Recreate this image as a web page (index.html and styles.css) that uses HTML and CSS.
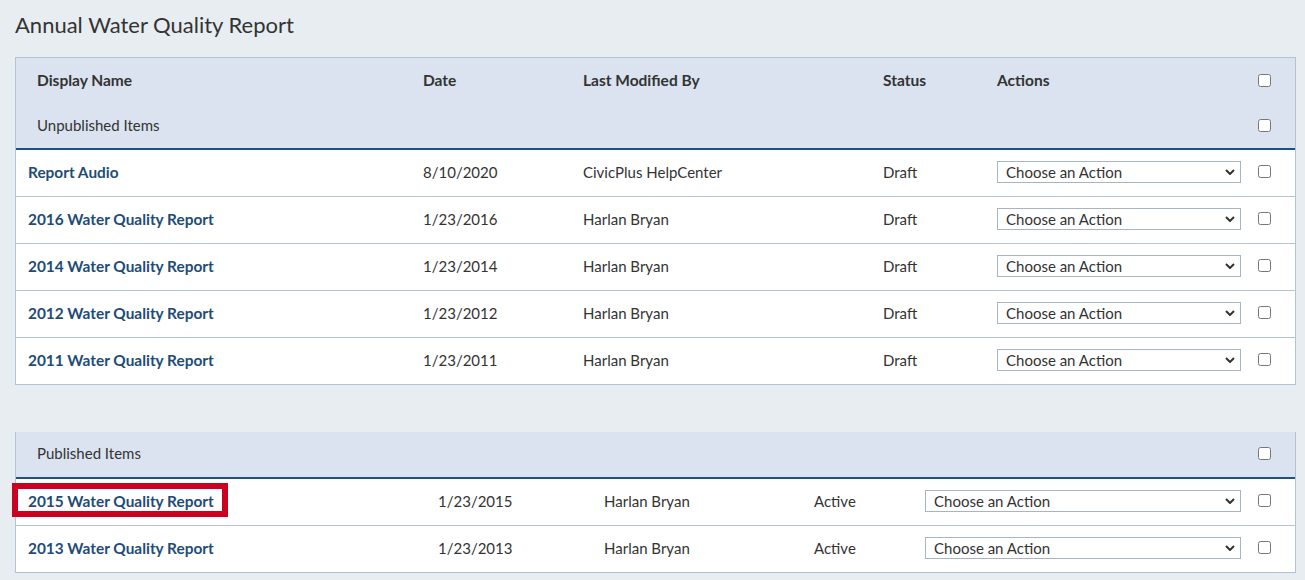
FILE: index.html
```html
<!DOCTYPE html>
<html>
<head>
<meta charset="utf-8">
<link rel="stylesheet" href="styles.css">
</head>
<body>
<div class="page">
  <h1 class="title">Annual Water Quality Report</h1>

  <div class="table t1 bordered-top">
    <div class="row head">
      <div class="c first">Display Name</div>
      <div class="c">Date</div>
      <div class="c">Last Modified By</div>
      <div class="c">Status</div>
      <div class="c">Actions</div>
      <div class="c chk"><input type="checkbox"></div>
    </div>
    <div class="row sub">
      <div class="c first span5">Unpublished Items</div>
      <div class="c chk"><input type="checkbox"></div>
    </div>
    <div class="row item">
      <div class="c"><a class="link" href="#">Report Audio</a></div>
      <div class="c">8/10/2020</div>
      <div class="c">CivicPlus HelpCenter</div>
      <div class="c">Draft</div>
      <div class="c"><div class="sel"><select><option>Choose an Action</option></select><svg class="chev" viewBox="0 0 10 6" width="10" height="6"><path d="M1 1 L5 5 L9 1" fill="none" stroke="#333" stroke-width="2"/></svg></div></div>
      <div class="c chk"><input type="checkbox"></div>
    </div>
    <div class="row item">
      <div class="c"><a class="link" href="#">2016 Water Quality Report</a></div>
      <div class="c">1/23/2016</div>
      <div class="c">Harlan Bryan</div>
      <div class="c">Draft</div>
      <div class="c"><div class="sel"><select><option>Choose an Action</option></select><svg class="chev" viewBox="0 0 10 6" width="10" height="6"><path d="M1 1 L5 5 L9 1" fill="none" stroke="#333" stroke-width="2"/></svg></div></div>
      <div class="c chk"><input type="checkbox"></div>
    </div>
    <div class="row item">
      <div class="c"><a class="link" href="#">2014 Water Quality Report</a></div>
      <div class="c">1/23/2014</div>
      <div class="c">Harlan Bryan</div>
      <div class="c">Draft</div>
      <div class="c"><div class="sel"><select><option>Choose an Action</option></select><svg class="chev" viewBox="0 0 10 6" width="10" height="6"><path d="M1 1 L5 5 L9 1" fill="none" stroke="#333" stroke-width="2"/></svg></div></div>
      <div class="c chk"><input type="checkbox"></div>
    </div>
    <div class="row item">
      <div class="c"><a class="link" href="#">2012 Water Quality Report</a></div>
      <div class="c">1/23/2012</div>
      <div class="c">Harlan Bryan</div>
      <div class="c">Draft</div>
      <div class="c"><div class="sel"><select><option>Choose an Action</option></select><svg class="chev" viewBox="0 0 10 6" width="10" height="6"><path d="M1 1 L5 5 L9 1" fill="none" stroke="#333" stroke-width="2"/></svg></div></div>
      <div class="c chk"><input type="checkbox"></div>
    </div>
    <div class="row item">
      <div class="c"><a class="link" href="#">2011 Water Quality Report</a></div>
      <div class="c">1/23/2011</div>
      <div class="c">Harlan Bryan</div>
      <div class="c">Draft</div>
      <div class="c"><div class="sel"><select><option>Choose an Action</option></select><svg class="chev" viewBox="0 0 10 6" width="10" height="6"><path d="M1 1 L5 5 L9 1" fill="none" stroke="#333" stroke-width="2"/></svg></div></div>
      <div class="c chk"><input type="checkbox"></div>
    </div>
  </div>

  <div class="table t2">
    <div class="row sub">
      <div class="c first span5">Published Items</div>
      <div class="c chk"><input type="checkbox"></div>
    </div>
    <div class="row item">
      <div class="c"><a class="link hl" href="#">2015 Water Quality Report</a></div>
      <div class="c">1/23/2015</div>
      <div class="c">Harlan Bryan</div>
      <div class="c">Active</div>
      <div class="c"><div class="sel"><select><option>Choose an Action</option></select><svg class="chev" viewBox="0 0 10 6" width="10" height="6"><path d="M1 1 L5 5 L9 1" fill="none" stroke="#333" stroke-width="2"/></svg></div></div>
      <div class="c chk"><input type="checkbox"></div>
    </div>
    <div class="row item">
      <div class="c"><a class="link" href="#">2013 Water Quality Report</a></div>
      <div class="c">1/23/2013</div>
      <div class="c">Harlan Bryan</div>
      <div class="c">Active</div>
      <div class="c"><div class="sel"><select><option>Choose an Action</option></select><svg class="chev" viewBox="0 0 10 6" width="10" height="6"><path d="M1 1 L5 5 L9 1" fill="none" stroke="#333" stroke-width="2"/></svg></div></div>
      <div class="c chk"><input type="checkbox"></div>
    </div>
  </div>
</div>
</body>
</html>
```

FILE: styles.css
```css
html, body {
  margin: 0;
  padding: 0;
  background: #e8edf2;
}
body {
  font-family: "Lato", "Open Sans", sans-serif;
  color: #333;
  font-size: 15px;
}
.page {
  padding: 0 9px 0 15px;
}
.title {
  margin: 0;
  padding: 12px 0 0 0;
  height: 57px;
  box-sizing: border-box;
  font-size: 22px;
  font-weight: 400;
  color: #333;
  line-height: 26px;
}
.table {
  border-left: 1px solid #b4c3d3;
  border-right: 1px solid #b4c3d3;
  border-bottom: 1px solid #b4c3d3;
  background: #fff;
}
.bordered-top {
  border-top: 1px solid #b4c3d3;
}
.t2 {
  margin-top: 47px;
}
.row {
  display: grid;
  align-items: center;
}
.t1 .row {
  grid-template-columns: 395px 160px 300px 114px 261px 1fr;
}
.t2 .row {
  grid-template-columns: 410px 166px 210px 111px 333px 1fr;
}
.c {
  padding-left: 12px;
  white-space: nowrap;
}
.c.first {
  padding-left: 21px;
}
.span5 {
  grid-column: 1 / span 5;
}
.head, .sub {
  background: #dae3ef;
}
.head {
  height: 44px;
  font-weight: 700;
  font-size: 15.5px;
}
.sub {
  height: 46px;
  border-bottom: 2px solid #1b5284;
}
.t2 .sub {
  height: 42px;
  padding-bottom: 3px;
}
.item {
  height: 47px;
  padding-bottom: 2px;
  box-sizing: border-box;
  border-bottom: 1px solid #b4c3d3;
}
.item:last-child {
  border-bottom: none;
  height: 46px;
}
.chk {
  padding-left: 12px;
}
.chk input {
  margin: 0;
  width: 13px;
  height: 13px;
  display: block;
}
.item .chk input {
  margin-top: -2px;
}
.link {
  color: #1e4c78;
  font-weight: 700;
  font-size: 15.4px;
  text-decoration: none;
}
.hl {
  position: relative;
  display: inline-block;
}
.hl::after {
  content: "";
  position: absolute;
  left: -16px;
  right: -14px;
  top: -9px;
  bottom: -7px;
  border: 6px solid #cc0020;
}
.sel {
  position: relative;
  margin-right: 5px;
}
.sel select {
  appearance: none;
  -webkit-appearance: none;
  width: 100%;
  height: 22px;
  box-sizing: border-box;
  border: 1px solid #a8b4c1;
  border-radius: 0;
  background: #fff;
  font-family: "Lato", "Open Sans", sans-serif;
  font-size: 15px;
  color: #333;
  padding: 0 0 0 8px;
  margin: 0;
  line-height: 20px;
}
.chev {
  position: absolute;
  right: 6px;
  top: 8px;
  pointer-events: none;
}
```
